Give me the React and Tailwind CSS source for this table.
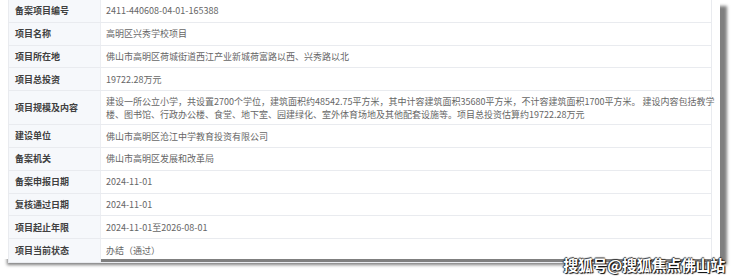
const rows = [
  ['备案项目编号', '2411-440608-04-01-165388'],
  ['项目名称', '高明区兴秀学校项目'],
  ['项目所在地', '佛山市高明区荷城街道西江产业新城荷富路以西、兴秀路以北'],
  ['项目总投资', '19722.28万元'],
  [
    '项目规模及内容',
    [
      '建设一所公立小学，共设置2700个学位，建筑面积约48542.75平方米，其中计容建筑面积35680平方米，不计容建筑面积1700平方米。 建设内容包括教学',
      '楼、图书馆、行政办公楼、食堂、地下室、园建绿化、室外体育场地及其他配套设施等。项目总投资估算约19722.28万元',
    ],
  ],
  ['建设单位', '佛山市高明区沧江中学教育投资有限公司'],
  ['备案机关', '佛山市高明区发展和改革局'],
  ['备案申报日期', '2024-11-01'],
  ['复核通过日期', '2024-11-01'],
  ['项目起止年限', '2024-11-01至2026-08-01'],
  ['项目当前状态', '办结（通过）'],
];

const font = { fontFamily: '"Noto Sans CJK SC", "Noto Sans", sans-serif' };

export default function App() {
  return (
    <div className="relative w-[740px] h-[277px] bg-white overflow-hidden" style={font}>
      <div className="absolute left-0 top-0 w-[720px] h-[259px] bg-white shadow-[7px_6px_3px_rgba(0,0,0,0.5)]">
        <div className="ml-2 mr-2 -mt-px border border-[#e9ebef] flex flex-col">
          {rows.map(([label, value], i) => {
            const multi = Array.isArray(value);
            return (
              <div
                key={i}
                className={`flex border-b border-[#e9ebef] last:border-b-0 ${multi ? 'h-[34px]' : 'h-[22.8px]'}`}
              >
                <div className="w-[92px] shrink-0 bg-[#f6f8fb] border-r border-[#eceef2] flex items-center pl-[6px] text-[9px] font-semibold text-[#404040]">
                  {label}
                </div>
                <div className="flex-1 flex flex-col justify-center pl-[5px] text-[9px] text-[#666666] leading-[13px] whitespace-nowrap">
                  {multi ? (
                    <>
                      <span>{value[0]}</span>
                      <span>{value[1]}</span>
                    </>
                  ) : (
                    <span>{value}</span>
                  )}
                </div>
              </div>
            );
          })}
        </div>
      </div>
      <div className="absolute right-[15px] bottom-[5px] text-[15px] font-bold text-white leading-none tracking-[-0.3px] [text-shadow:1px_1px_1px_#000,-1px_0_1px_#333,0_-1px_1px_#333]">
        搜狐号@搜狐焦点佛山站
      </div>
    </div>
  );
}
